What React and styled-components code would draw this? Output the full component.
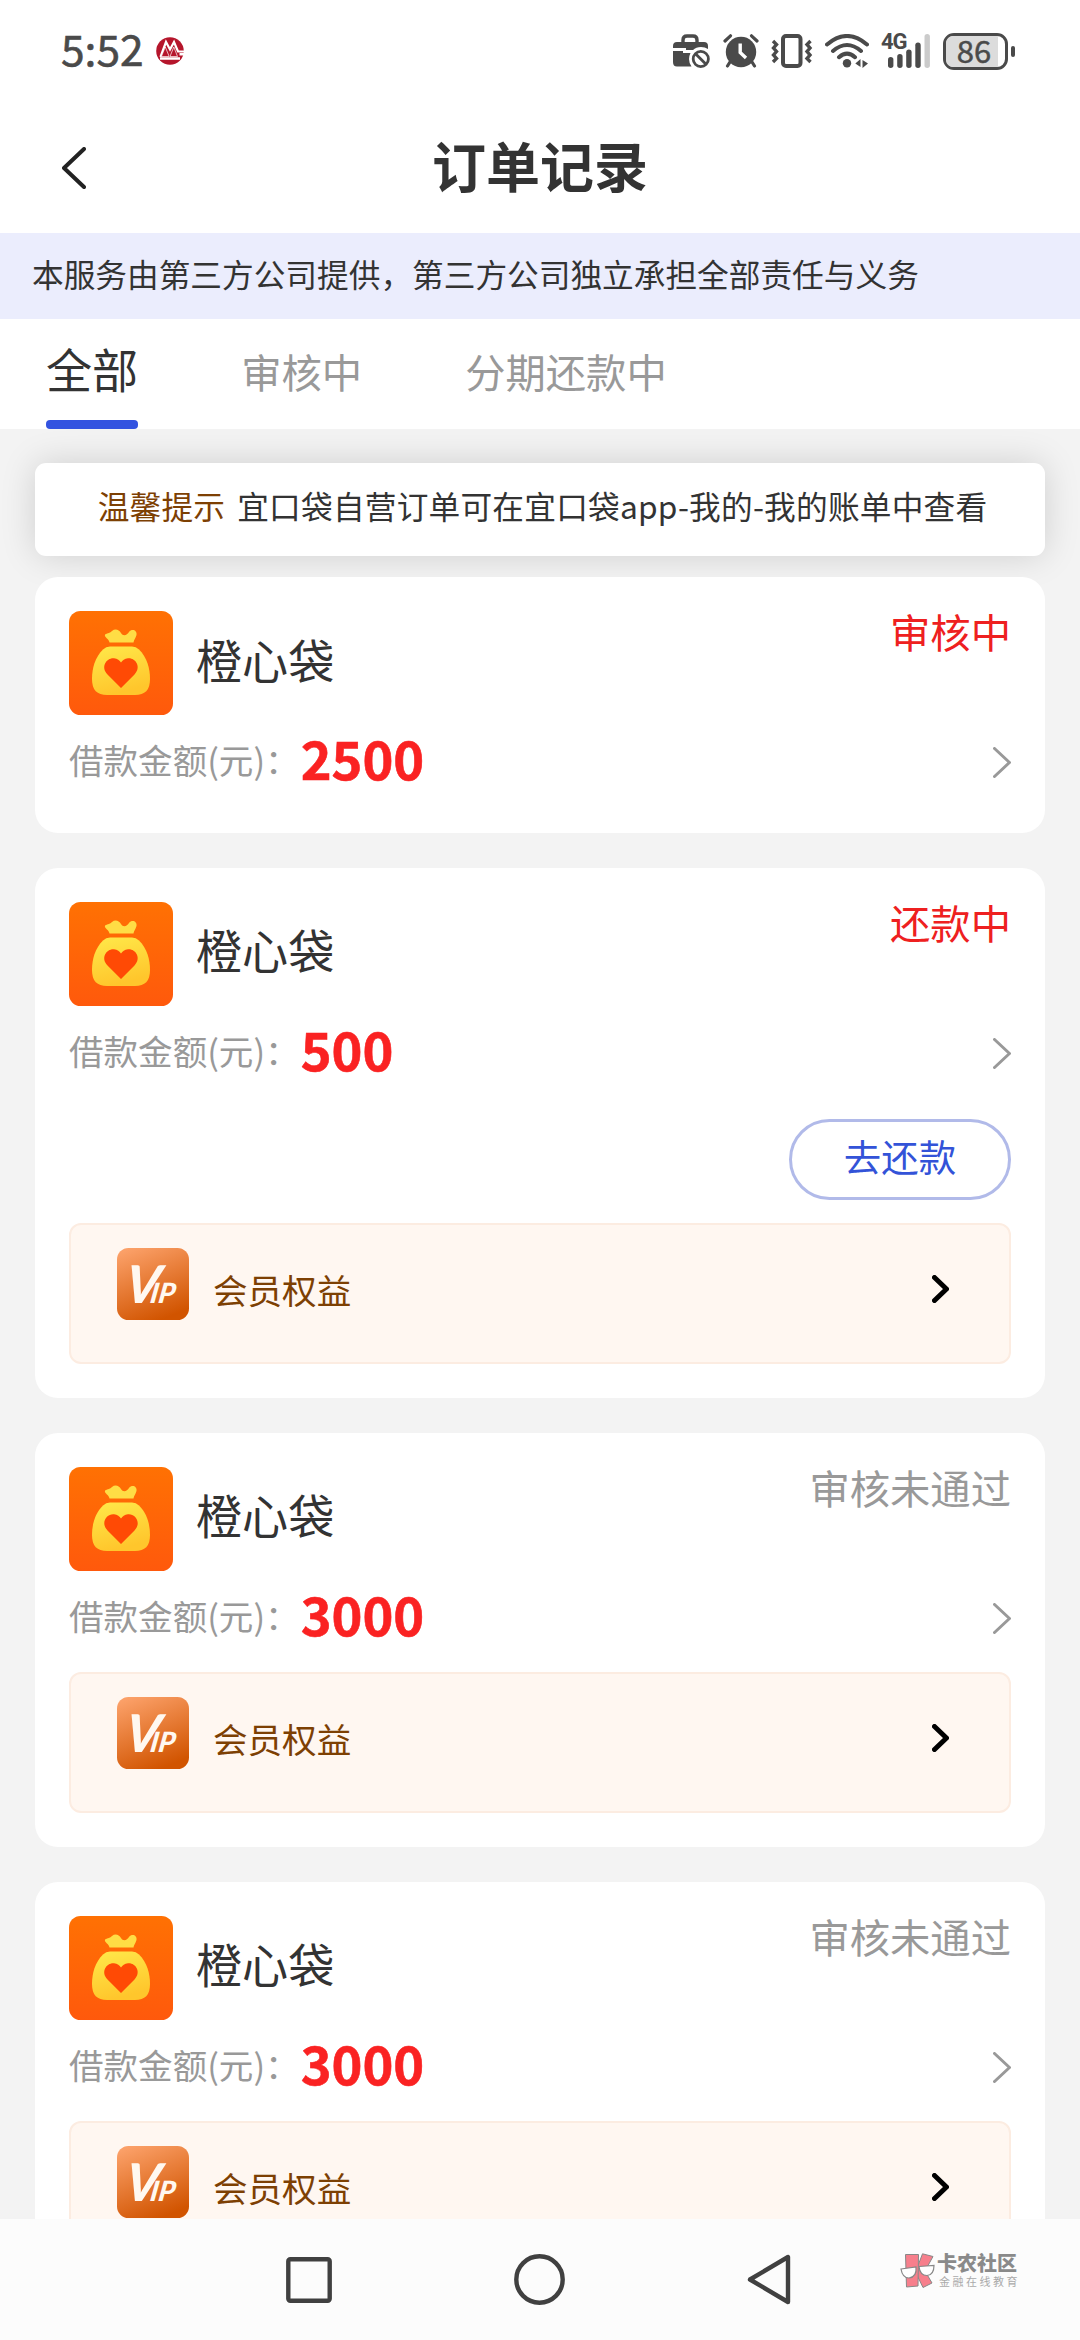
import styled, { createGlobalStyle } from "styled-components"

const orders = [
    { id: 1, name: '橙心袋', amount: 2500, status: '审核中', active: true },
    { id: 2, name: '橙心袋', amount: 500, status: '还款中', active: true, canRepay: true, vip: true },
    { id: 3, name: '橙心袋', amount: 3000, status: '审核未通过', vip: true },
    { id: 4, name: '橙心袋', amount: 3000, status: '审核未通过', vip: true },
]

const tabs = ['全部', '审核中', '分期还款中']

function BankLogo() {
    return (
        <svg width="28" height="28" viewBox="0 0 28 28">
            <circle cx="14" cy="14" r="13.8" fill="#b5152b" />
            <path d="M4.5 20 L10 5 L14 12.5 L18 5 L22 14.5 H28" fill="none" stroke="#fff" strokeWidth="2.2" />
            <path d="M9.3 10 L13.2 19.5 H5.4Z M17.8 10 L21.5 19.5 H14Z" fill="#b5152b" stroke="#fff" strokeWidth="0.7" />
            <path d="M4 21.5 H24 M23.5 17.3 H28" stroke="#fff" strokeWidth="2.4" />
        </svg>
    )
}

function BriefcaseBlocked() {
    return (
        <svg width="38" height="34" viewBox="0 0 38 34">
            <path d="M10 9 V6 Q10 2 14 2 H20 Q24 2 24 6 V9" fill="none" stroke="#4a4a4a" strokeWidth="3.4" />
            <path d="M0 14 V12 Q0 8 4 8 H31 Q35 8 35 12 V15 Q32 13 28 13 Q23 13 20 16 H13 V14Z" fill="#4a4a4a" />
            <path d="M0 17 H10 V19 H17.5 Q16 22 16 25 Q16 29 18.5 32.5 H4 Q0 32.5 0 28Z" fill="#4a4a4a" />
            <circle cx="27.8" cy="25" r="7.6" fill="none" stroke="#4a4a4a" strokeWidth="2.8" />
            <path d="M22.5 19.7 L33 30.3" stroke="#4a4a4a" strokeWidth="2.8" />
        </svg>
    )
}

function AlarmIcon() {
    return (
        <svg width="36" height="34" viewBox="0 0 36 34">
            <circle cx="18" cy="18" r="15.2" fill="#4a4a4a" />
            <path d="M2 7 L7.5 1.8 M34 7 L28.5 1.8 M7 28 L4.5 32 M29 28 L31.5 32" stroke="#4a4a4a" strokeWidth="3.2" strokeLinecap="round" />
            <path d="M17.2 9.5 V18.5 L23 24" fill="none" stroke="#fff" strokeWidth="3.4" />
        </svg>
    )
}

function VibrateIcon() {
    return (
        <svg width="42" height="34" viewBox="0 0 42 34">
            <rect x="12" y="2" width="17.5" height="30" rx="3" fill="none" stroke="#4a4a4a" strokeWidth="4" />
            <path d="M2 7 L5.5 10.5 L2.5 14 L5.5 17.5 L2.5 21 L5.5 24.5 L2 28 M39.5 7 L36 10.5 L39 14 L36 17.5 L39 21 L36 24.5 L39.5 28" fill="none" stroke="#4a4a4a" strokeWidth="3.4" />
        </svg>
    )
}

function WifiIcon() {
    return (
        <svg width="44" height="34" viewBox="0 0 44 34">
            <path d="M2 10.5 Q22 -6.5 42 10.5 M8 17 Q22 5 36 17 M14 23.2 Q22 16 30 23.2" fill="none" stroke="#4a4a4a" strokeWidth="4" strokeLinecap="round" />
            <circle cx="22" cy="29.2" r="4.2" fill="#4a4a4a" />
            <path d="M30.3 29.5 L35.5 25 V33Z M37.5 26 V34 L43 29.5Z" fill="#4a4a4a" />
        </svg>
    )
}

function SignalBars() {
    return (
        <svg width="44" height="34" viewBox="0 0 44 34">
            <rect x="1" y="23" width="5.4" height="11" rx="2.7" fill="#4a4a4a" />
            <rect x="10.2" y="20" width="5.4" height="14" rx="2.7" fill="#4a4a4a" />
            <rect x="19.2" y="15.5" width="5.4" height="18.5" rx="2.7" fill="#4a4a4a" />
            <rect x="28.3" y="8.5" width="5.4" height="25.5" rx="2.7" fill="#4a4a4a" />
            <rect x="37.5" y="0" width="5.4" height="34" rx="2.7" fill="#cbcbcb" />
        </svg>
    )
}

function MoneyBag() {
    return (
        <svg width="104" height="104" viewBox="0 0 104 104">
            <defs>
                <linearGradient id="bagBg" x1="0" y1="0" x2="0" y2="1">
                    <stop offset="0" stopColor="#ff7103" />
                    <stop offset="1" stopColor="#ff590c" />
                </linearGradient>
                <linearGradient id="bagBody" x1="0" y1="0" x2="0.3" y2="1">
                    <stop offset="0" stopColor="#ffe94a" />
                    <stop offset="1" stopColor="#ffc62c" />
                </linearGradient>
            </defs>
            <rect width="104" height="104" rx="11.5" fill="url(#bagBg)" />
            <path d="M36 23.5 C39 22 41 22 43 20 C46 17.5 50 18.5 52 22 C54 25.5 58 24.5 60 21 C63 17 68.5 19.5 67.5 24 C66.5 27.5 65 28.5 64.5 31.5 H40.5 C40 27.5 35 26.5 36 23.5Z" fill="#ffdd45" />
            <path d="M41 35.5 H63 Q67 35.5 70 38.5 C78 46.5 81 57 81 68 C81 79 76 84 66 84 H38 C28 84 23 79 23 68 C23 57 26 46.5 34 38.5 Q37 35.5 41 35.5Z" fill="url(#bagBody)" />
            <path d="M52 77 L38.5 63.5 C31 55.5 38 46.5 45 47.3 C48.5 47.5 50.5 49.5 52 51.5 C53.5 49.5 55.5 47.5 59 47.3 C66 46.5 73 55.5 65.5 63.5Z" fill="#ff4a05" />
        </svg>
    )
}

function VipIcon() {
    return (
        <svg width="72" height="72" viewBox="0 0 72 72">
            <defs>
                <linearGradient id="vipBg" x1="0.2" y1="0" x2="0.6" y2="1">
                    <stop offset="0" stopColor="#fba068" />
                    <stop offset="1" stopColor="#d15400" />
                </linearGradient>
            </defs>
            <rect width="72" height="72" rx="11.5" fill="url(#vipBg)" />
            <text x="15" y="55.5" transform="skewX(-9)" fill="#fff8f0" fontFamily="Lato, sans-serif" fontStyle="italic" fontWeight="900" fontSize="52">
                V<tspan dx="-8" fontSize="28">IP</tspan>
            </text>
        </svg>
    )
}

function Chevron({ w, h, color, thickness, left }) {
    const t = thickness / 2
    const d = left
        ? `M${w - t} ${t} L${t} ${h / 2} L${w - t} ${h - t}`
        : `M${t} ${t} L${w - t} ${h / 2} L${t} ${h - t}`
    return (
        <svg width={w} height={h} viewBox={`0 0 ${w} ${h}`}>
            <path d={d} fill="none" stroke={color} strokeWidth={thickness} strokeLinecap="round" strokeLinejoin="round" />
        </svg>
    )
}

function CommunityLogo() {
    return (
        <svg width="35" height="36" viewBox="0 0 35 36">
            <g fill="#f77f8c" stroke="#888" strokeWidth="1">
                <path d="M22.5 0.8 L33 3.5 L25 18 L32 30 L23 34.5 L15.5 19Z" />
                <path d="M5.5 1.5 H18.5 L18 33 L6.5 34Z" />
            </g>
            <path d="M1 16 L16 14 Q17 24 9 25 Q2.5 25 1 16Z M19 13.5 L34 12.5 Q34 22 27 22.5 Q20 22.5 19 13.5Z" fill="#fff" stroke="#888" strokeWidth="1.2" />
        </svg>
    )
}

function OrderCard({ order }) {
    return (
        <Card>
            <CardHead>
                <MoneyBag />
                <OrderName>{order.name}</OrderName>
                <OrderStatus $active={order.active}>{order.status}</OrderStatus>
            </CardHead>
            <AmountRow>
                <AmountLabel>借款金额(元)：</AmountLabel>
                <Amount>{order.amount}</Amount>
                <Chevron w={18} h={31} color="#999" thickness={3} />
            </AmountRow>
            {order.canRepay && <RepayButton>去还款</RepayButton>}
            {order.vip && (
                <VipRow>
                    <VipIcon />
                    <VipText>会员权益</VipText>
                    <Chevron w={17} h={28} color="#000" thickness={5} />
                </VipRow>
            )}
        </Card>
    )
}

function App() {
    return (
        <Screen>
            <GlobalStyle />
            <StatusBar>
                <Clock>5:52</Clock>
                <BankLogo />
                <StatusIcons>
                    <BriefcaseBlocked />
                    <AlarmIcon />
                    <VibrateIcon />
                    <WifiIcon />
                    <Signal>
                        <Network>4G</Network>
                        <SignalBars />
                    </Signal>
                    <Battery><BatteryLevel>86</BatteryLevel></Battery>
                    <BatteryTip />
                </StatusIcons>
            </StatusBar>
            <Header>
                <Chevron w={24} h={42} color="#222" thickness={4} left />
                <Title>订单记录</Title>
            </Header>
            <Notice>本服务由第三方公司提供，第三方公司独立承担全部责任与义务</Notice>
            <Tabs>
                {tabs.map((tab, i) => <Tab key={tab} $active={i === 0}>{tab}</Tab>)}
            </Tabs>
            <Content>
                <Tip><strong>温馨提示</strong>宜口袋自营订单可在宜口袋app-我的-我的账单中查看</Tip>
                <OrderList>
                    {orders.map(order => <OrderCard key={order.id} order={order} />)}
                </OrderList>
            </Content>
            <NavBar>
                <svg width="46" height="46" viewBox="0 0 46 46">
                    <rect x="2.3" y="2.3" width="41.4" height="41.4" rx="2" fill="none" stroke="#404040" strokeWidth="4.4" />
                </svg>
                <svg width="51" height="51" viewBox="0 0 51 51">
                    <circle cx="25.5" cy="25.5" r="23.2" fill="none" stroke="#404040" strokeWidth="4.4" />
                </svg>
                <svg width="44" height="51" viewBox="0 0 44 51">
                    <path d="M41 3 V48 L3 25.5Z" fill="none" stroke="#404040" strokeWidth="4.4" strokeLinejoin="round" />
                </svg>
                <Watermark>
                    <CommunityLogo />
                    <WatermarkText>
                        <b>卡农社区</b>
                        <small>金融在线教育</small>
                    </WatermarkText>
                </Watermark>
            </NavBar>
        </Screen>
    )
}

export default App


const GlobalStyle = createGlobalStyle`
    * {
        box-sizing: border-box;
    }
    body {
        margin: 0;
    }
    svg {
        display: block;
        flex-shrink: 0;
    }
`

const Screen = styled.div`
    width: 1080px;
    height: 2340px;
    display: flex;
    flex-direction: column;
    overflow: hidden;
    background: #fff;
    color: #333;
    font-family: "Noto Sans CJK SC", sans-serif;
    white-space: nowrap;
`

const StatusBar = styled.div`
    height: 102px;
    flex-shrink: 0;
    display: flex;
    align-items: center;
    padding: 0 65px 0 61px;
`

const Clock = styled.span`
    font-size: 42.5px;
    line-height: 60px;
    color: #4a4a4a;
    -webkit-text-stroke: 0.6px #4a4a4a;
    margin-right: 12px;
    padding-bottom: 6px;
`

const StatusIcons = styled.div`
    display: flex;
    align-items: center;
    margin-left: auto;
    gap: 12px;
`

const Signal = styled.div`
    position: relative;
    padding-left: 6px;
`

const Network = styled.span`
    position: absolute;
    left: 0;
    top: -4px;
    font-family: Roboto, sans-serif;
    font-size: 22px;
    font-weight: 700;
    line-height: 24px;
    letter-spacing: -1px;
    color: #4a4a4a;
`

const Battery = styled.div`
    width: 65px;
    height: 37px;
    border: 3px solid #4a4a4a;
    border-radius: 11px;
    padding: 0 7px 0 0;
    background: #fff;
`

const BatteryLevel = styled.div`
    height: 100%;
    border-radius: 7px 0 0 7px;
    background: #dcdcdc;
    color: #4a4a4a;
    font-size: 31px;
    line-height: 28px;
    -webkit-text-stroke: 0.5px #4a4a4a;
    text-align: center;
    padding-left: 4px;
`

const BatteryTip = styled.div`
    width: 4px;
    height: 11px;
    border-radius: 2px;
    background: #4a4a4a;
    margin-left: -9px;
`

const Header = styled.div`
    height: 131px;
    flex-shrink: 0;
    display: flex;
    align-items: center;
    padding: 0 62px;
`

const Title = styled.h1`
    flex: 1;
    margin: 0 24px 0 0;
    padding-bottom: 6px;
    text-align: center;
    font-size: 54px;
    font-weight: 700;
    line-height: 80px;
`

const Notice = styled.div`
    height: 86px;
    flex-shrink: 0;
    padding-left: 32px;
    background: #ebedfd;
    font-size: 31.68px;
    line-height: 81px;
`

const Tabs = styled.div`
    height: 110px;
    flex-shrink: 0;
    display: flex;
    gap: 103px;
    padding-left: 46px;
`

const Tab = styled.div`
    display: flex;
    flex-direction: column;
    justify-content: space-between;
    font-size: ${props => props.$active ? '46.08px' : '40.32px'};
    line-height: ${props => props.$active ? '99px' : '104px'};
    color: ${props => props.$active ? '#333' : '#999'};
    &::after{
        content: '';
        display: ${props => props.$active ? 'block' : 'none'};
        height: 9px;
        border-radius: 4px;
        background: #3353e0;
    }
`

const Content = styled.div`
    flex: 1;
    min-height: 0;
    overflow: hidden;
    padding: 34px 35px 0;
    background: #f3f3f3;
`

const Tip = styled.div`
    height: 93px;
    border-radius: 11px;
    background: #fff;
    box-shadow: 0 0 35px rgba(0, 0, 0, 0.15);
    text-align: center;
    font-size: 31.68px;
    line-height: 85px;
    letter-spacing: 0.22px;
    padding-left: 5px;
    strong{
        font-weight: 400;
        color: #7d4003;
        margin-right: 12px;
    }
`

const OrderList = styled.div`
    position: relative;
    display: flex;
    flex-direction: column;
    gap: 35px;
    margin-top: 21px;
`

const Card = styled.div`
    display: flex;
    flex-direction: column;
    padding: 34px 34px 34.4px;
    border-radius: 23px;
    background: #fff;
`

const CardHead = styled.div`
    height: 104px;
    display: flex;
    align-items: center;
`

const OrderName = styled.div`
    flex: 1;
    margin-left: 23px;
    padding-bottom: 9px;
    font-size: 46.08px;
    line-height: 90px;
`

const OrderStatus = styled.div`
    align-self: flex-start;
    font-size: 40.32px;
    line-height: 40px;
    color: ${props => props.$active ? '#ee2020' : '#999'};
`

const AmountRow = styled.div`
    height: 83.6px;
    display: flex;
    align-items: center;
    padding-top: 12px;
`

const AmountLabel = styled.span`
    padding-bottom: 8px;
    font-size: 34.56px;
    line-height: 60px;
    color: #999;
`

const Amount = styled.span`
    flex: 1;
    padding: 0 0 11px 1px;
    font-size: 52.4px;
    font-weight: 700;
    line-height: 60px;
    color: #fa2222;
    -webkit-text-stroke: 0.6px #fa2222;
`

const RepayButton = styled.button`
    align-self: flex-end;
    width: 222px;
    height: 81px;
    margin: 29px 0 6px;
    padding: 0 0 7px;
    border: 3px solid #b1bae9;
    border-radius: 41px;
    background: #fff;
    color: #3353d8;
    font-family: inherit;
    font-size: 37.44px;
    line-height: 60px;
`

const VipRow = styled.div`
    height: 141px;
    margin-top: 17px;
    display: flex;
    align-items: flex-start;
    padding: 23px 60px 0 46px;
    border: 2px solid #fcece1;
    border-radius: 12px;
    background: #fff7f1;
    svg:last-child{
        margin-top: 27px;
    }
`

const VipText = styled.span`
    flex: 1;
    margin-left: 24px;
    padding-top: 8px;
    font-size: 34.56px;
    line-height: 66px;
    color: #7d4003;
`

const NavBar = styled.div`
    position: relative;
    height: 121px;
    flex-shrink: 0;
    display: flex;
    align-items: center;
    gap: 182px;
    padding-left: 286px;
    background: #fcfcfc;
`

const Watermark = styled.div`
    position: absolute;
    left: 900px;
    top: 33px;
    display: flex;
    align-items: center;
    gap: 2px;
`

const WatermarkText = styled.div`
    display: flex;
    flex-direction: column;
    color: #8a8a8a;
    b{
        font-size: 20px;
        line-height: 21px;
        font-weight: 900;
    }
    small{
        font-size: 11px;
        line-height: 16px;
        letter-spacing: 2.5px;
        padding-left: 2px;
        color: #aaa;
    }
`
